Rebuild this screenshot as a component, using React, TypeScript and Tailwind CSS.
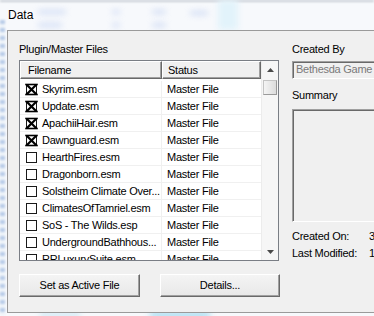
import React from 'react'

const rows = [
  { name: 'Skyrim.esm', checked: true },
  { name: 'Update.esm', checked: true },
  { name: 'ApachiiHair.esm', checked: true },
  { name: 'Dawnguard.esm', checked: true },
  { name: 'HearthFires.esm', checked: false },
  { name: 'Dragonborn.esm', checked: false },
  { name: 'Solstheim Climate Over...', checked: false },
  { name: 'ClimatesOfTamriel.esm', checked: false },
  { name: 'SoS - The Wilds.esp', checked: false },
  { name: 'UndergroundBathhous...', checked: false },
  { name: 'RRLuxurySuite.esm', checked: false },
]

function CheckBox({ checked }: { checked: boolean }) {
  return (
    <svg width="13" height="13" viewBox="0 0 13 13" className="shrink-0">
      <rect x="1.5" y="1.5" width="10" height="10" fill="#fff" stroke="#1a1a1a" strokeWidth="1" />
      {checked && (
        <g stroke="#000" strokeWidth="2.2" strokeLinecap="square">
          <line x1="2.5" y1="2.5" x2="10.5" y2="10.5" />
          <line x1="10.5" y1="2.5" x2="2.5" y2="10.5" />
          <line x1="1" y1="1.5" x2="12" y2="1.5" strokeWidth="1.6" />
          <line x1="1" y1="11.5" x2="12" y2="11.5" strokeWidth="1.6" />
        </g>
      )}
    </svg>
  )
}

function Arrow({ down }: { down?: boolean }) {
  return (
    <svg width="7" height="4" viewBox="0 0 7 4">
      {down ? <path d="M0 0h7L3.5 4z" fill="#4a4a4a" /> : <path d="M0 4h7L3.5 0z" fill="#4a4a4a" />}
    </svg>
  )
}

function Button({ label, width }: { label: string; width: string }) {
  return (
    <div
      className={`${width} h-[23px] flex items-center justify-center bg-gradient-to-b from-[#f4f4f4] to-[#e8e8e8] border border-t-white border-l-white border-r-[#696969] border-b-[#696969] shadow-[inset_-1px_-1px_0_#a0a0a0] text-[11px] text-black`}
    >
      {label}
    </div>
  )
}

export default function App() {
  return (
    <div className="relative w-[374px] h-[316px] overflow-hidden bg-[#f7f9fc] font-['Liberation_Sans',Arial,sans-serif] tracking-[-0.25px] text-black">
      {/* blurred window behind the glass frame */}
      <div className="absolute inset-0 pointer-events-none">
        <div className="absolute left-0 right-0 top-0 h-[2px] bg-[#9aa3ad] blur-[1px] opacity-50" />
        <div className="absolute left-[38px] top-[10px] w-[28px] h-[4px] rounded bg-[#b3c6ee] blur-[3px] opacity-60" />
        <div className="absolute left-[112px] top-[10px] w-[8px] h-[4px] rounded bg-[#b3c6ee] blur-[3px] opacity-60" />
        <div className="absolute left-[152px] top-[10px] w-[14px] h-[4px] rounded bg-[#b3c6ee] blur-[3px] opacity-60" />
        <div className="absolute left-[38px] top-[23px] w-[24px] h-[4px] rounded bg-[#b3c6ee] blur-[3px] opacity-60" />
        <div className="absolute left-[112px] top-[23px] w-[8px] h-[4px] rounded bg-[#b3c6ee] blur-[3px] opacity-60" />
        <div className="absolute left-[152px] top-[23px] w-[14px] h-[4px] rounded bg-[#b3c6ee] blur-[3px] opacity-60" />
        <div className="absolute left-[190px] top-[11px] w-[18px] h-[4px] rounded bg-[#b3c6ee] blur-[3px] opacity-60" />
        <div className="absolute left-[218px] top-0 w-[20px] h-[30px] bg-[#e2f3fb] blur-[3px]" />
        <div className="absolute left-0 top-[20px] w-[5px] h-[296px] bg-[repeating-linear-gradient(180deg,#9db9e0_0_4px,#eef3f9_4px_8px)] blur-[1px] opacity-70" />
        <div className="absolute left-[150px] top-[312px] w-[60px] h-[6px] bg-[#7fd0ee] blur-[3px] opacity-70" />
        <div className="absolute left-[40px] top-[312px] w-[40px] h-[6px] bg-[#b8dff1] blur-[3px] opacity-60" />
      </div>

      <div className="relative h-[30px] pl-[8px] pt-[8px] text-[12px] leading-[15px] tracking-normal [text-shadow:0_0_6px_#fff,0_0_3px_#fff]">
        Data
      </div>

      <div className="relative ml-[7px] h-[283px] flex bg-[#f0f0f0] border-l border-t border-b border-[#9a9a9a]">
        {/* left column */}
        <div className="pl-[11px] pt-[12px] flex flex-col shrink-0">
          <div className="text-[11px] leading-[13px] h-[13px]">Plugin/Master Files</div>
          <div className="mt-[4px] w-[260px] h-[201px] border border-[#7a7e85] bg-white flex">
            <div className="w-[241px] flex flex-col">
              <div className="h-[18px] flex text-[11px] leading-[16px] bg-[#f0f0f0]">
                <div className="w-[142px] pl-[7px] border-t border-l border-white border-r border-r-[#696969] border-b border-b-[#696969] shadow-[inset_-1px_-1px_0_#a0a0a0]">
                  Filename
                </div>
                <div className="flex-1 pl-[5px] border-t border-l border-white border-r border-r-[#696969] border-b border-b-[#696969] shadow-[inset_-1px_-1px_0_#a0a0a0]">
                  Status
                </div>
              </div>
              <div className="flex-1 overflow-hidden pt-[2px]">
                {rows.map((r) => (
                  <div key={r.name} className="h-[17px] flex border-b border-[#f0f0f0] text-[11px] leading-[16px]">
                    <div className="w-[142px] pl-[5px] flex items-center gap-[4px] border-r border-[#f0f0f0] whitespace-nowrap overflow-hidden">
                      <CheckBox checked={r.checked} />
                      <span>{r.name}</span>
                    </div>
                    <div className="flex-1 pl-[5px] whitespace-nowrap">Master File</div>
                  </div>
                ))}
              </div>
            </div>
            {/* scrollbar */}
            <div className="w-[17px] flex flex-col bg-[#f6f6f6] border-l border-[#ececec]">
              <div className="h-[17px] flex items-center justify-center">
                <Arrow />
              </div>
              <div className="mt-[2px] mx-[1px] h-[15px] bg-gradient-to-r from-[#f4f4f4] to-[#dcdcdc] border border-[#c4c4c4] border-r-[#9a9a9a] border-b-[#9a9a9a]" />
              <div className="flex-1" />
              <div className="h-[17px] flex items-center justify-center">
                <Arrow down />
              </div>
            </div>
          </div>
          <div className="mt-[13px] flex gap-[20px]">
            <Button label="Set as Active File" width="w-[121px]" />
            <Button label="Details..." width="w-[120px]" />
          </div>
        </div>

        {/* right column */}
        <div className="ml-[12px] pt-[12px] w-[200px] shrink-0 flex flex-col text-[11px]">
          <div className="leading-[13px] h-[13px]">Created By</div>
          <div className="mt-[5px] h-[18px] border-t border-l border-[#a0a0a0] border-r border-b border-r-white border-b-white shadow-[inset_1px_1px_0_#696969] bg-[#f0f0f0] pl-[3px] leading-[15px] text-[#7a7a7a] whitespace-nowrap">
            Bethesda Game Softworks
          </div>
          <div className="mt-[10px] leading-[13px] h-[13px]">Summary</div>
          <div className="mt-[7px] h-[113px] border-t border-l border-[#a0a0a0] border-r border-b border-r-white border-b-white shadow-[inset_1px_1px_0_#696969] bg-[#f0f0f0]" />
          <div className="mt-[8px] grid grid-cols-[77px_1fr] gap-y-[4px] leading-[13px]">
            <span>Created On:</span>
            <span>3/12/2013</span>
            <span>Last Modified:</span>
            <span>11/11/2011</span>
          </div>
        </div>
      </div>
    </div>
  )
}
